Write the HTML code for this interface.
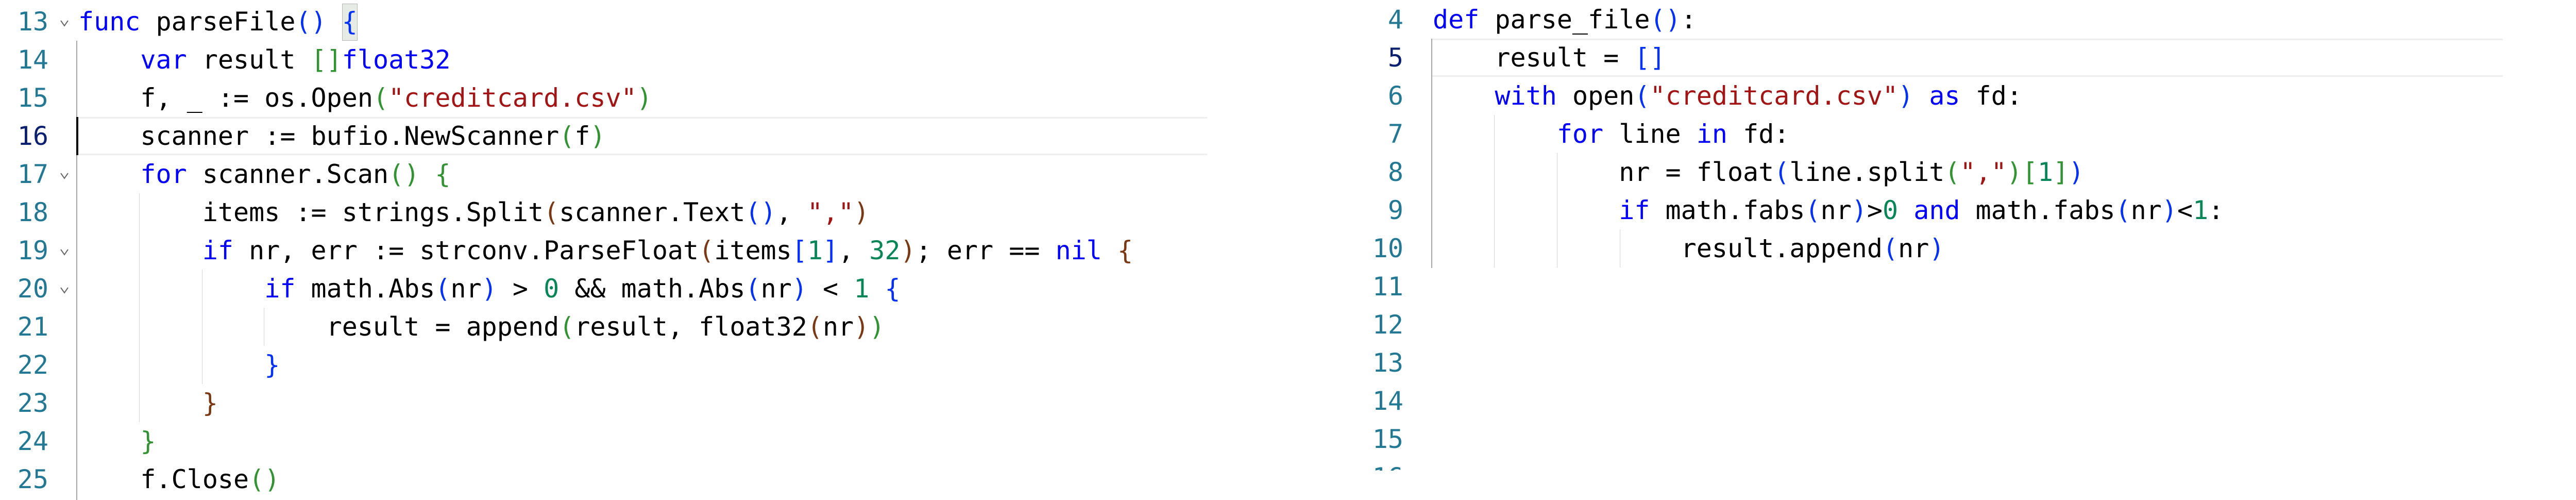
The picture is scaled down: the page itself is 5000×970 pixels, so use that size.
<!DOCTYPE html>
<html><head><meta charset="utf-8"><style>
html,body{margin:0;padding:0;background:#fff;width:5000px;height:970px;overflow:hidden;position:relative}
.l{position:absolute;height:74px;line-height:74px;font-family:"DejaVu Sans Mono","Liberation Mono",monospace;font-size:50px;white-space:pre;color:#000}
.n{position:absolute;height:74px;line-height:74px;font-family:"DejaVu Sans Mono","Liberation Mono",monospace;font-size:50px;color:#237893;text-align:right;width:200px}
.cur{color:#0b216f}
.k{color:#0000ff}.s{color:#a31515}.m{color:#098658}
.b1{color:#0431fa}.b2{color:#319331}.b3{color:#7b3814}
.v{position:absolute;width:2px;background:#a5a5a5}
.g{position:absolute;width:1px;background:#d3d3d3}
.hl{position:absolute;height:68px;border-top:3px solid #eeeeee;border-bottom:3px solid #eeeeee}
.ch{position:absolute}
#rp{position:absolute;left:0;top:0;width:5000px;height:913px;overflow:hidden}
</style></head><body>
<!-- left pane -->
<div class="hl" style="left:152px;top:227px;width:2191px"></div>
<div style="position:absolute;left:664px;top:7px;width:30px;height:72px;background:#e6ebe6;border:1px solid #b5b5b5;box-sizing:border-box"></div>
<div class="v" style="left:148px;top:79px;height:891px"></div>
<div style="position:absolute;left:148px;top:227px;width:4px;height:74px;background:#000"></div>
<div class="g" style="left:270px;top:375px;height:444px"></div>
<div class="g" style="left:392px;top:523px;height:222px"></div>
<div class="g" style="left:512px;top:597px;height:74px"></div>

<div class="n" style="left:-106px;top:5px">13</div>
<div class="n" style="left:-106px;top:79px">14</div>
<div class="n" style="left:-106px;top:153px">15</div>
<div class="n cur" style="left:-106px;top:227px">16</div>
<div class="n" style="left:-106px;top:301px">17</div>
<div class="n" style="left:-106px;top:375px">18</div>
<div class="n" style="left:-106px;top:449px">19</div>
<div class="n" style="left:-106px;top:523px">20</div>
<div class="n" style="left:-106px;top:597px">21</div>
<div class="n" style="left:-106px;top:671px">22</div>
<div class="n" style="left:-106px;top:745px">23</div>
<div class="n" style="left:-106px;top:819px">24</div>
<div class="n" style="left:-106px;top:893px">25</div>

<svg class="ch" style="left:116px;top:38px" width="18" height="14"><polyline points="2,2 9,12 16,2" fill="none" stroke="#666" stroke-width="2"/></svg>
<svg class="ch" style="left:116px;top:334px" width="18" height="14"><polyline points="2,2 9,12 16,2" fill="none" stroke="#666" stroke-width="2"/></svg>
<svg class="ch" style="left:116px;top:482px" width="18" height="14"><polyline points="2,2 9,12 16,2" fill="none" stroke="#666" stroke-width="2"/></svg>
<svg class="ch" style="left:116px;top:556px" width="18" height="14"><polyline points="2,2 9,12 16,2" fill="none" stroke="#666" stroke-width="2"/></svg>

<div class="l" style="left:152px;top:5px"><span class="k">func</span> parseFile<span class="b1">()</span> <span class="b1">{</span></div>
<div class="l" style="left:152px;top:79px">    <span class="k">var</span> result <span class="b2">[]</span><span class="k">float32</span></div>
<div class="l" style="left:152px;top:153px">    f, _ := os.Open<span class="b2">(</span><span class="s">"creditcard.csv"</span><span class="b2">)</span></div>
<div class="l" style="left:152px;top:227px">    scanner := bufio.NewScanner<span class="b2">(</span>f<span class="b2">)</span></div>
<div class="l" style="left:152px;top:301px">    <span class="k">for</span> scanner.Scan<span class="b2">()</span> <span class="b2">{</span></div>
<div class="l" style="left:152px;top:375px">        items := strings.Split<span class="b3">(</span>scanner.Text<span class="b1">()</span>, <span class="s">","</span><span class="b3">)</span></div>
<div class="l" style="left:152px;top:449px">        <span class="k">if</span> nr, err := strconv.ParseFloat<span class="b3">(</span>items<span class="b1">[</span><span class="m">1</span><span class="b1">]</span>, <span class="m">32</span><span class="b3">)</span>; err == <span class="k">nil</span> <span class="b3">{</span></div>
<div class="l" style="left:152px;top:523px">            <span class="k">if</span> math.Abs<span class="b1">(</span>nr<span class="b1">)</span> &gt; <span class="m">0</span> &amp;&amp; math.Abs<span class="b1">(</span>nr<span class="b1">)</span> &lt; <span class="m">1</span> <span class="b1">{</span></div>
<div class="l" style="left:152px;top:597px">                result = append<span class="b2">(</span>result, float32<span class="b3">(</span>nr<span class="b3">)</span><span class="b2">)</span></div>
<div class="l" style="left:152px;top:671px">            <span class="b1">}</span></div>
<div class="l" style="left:152px;top:745px">        <span class="b3">}</span></div>
<div class="l" style="left:152px;top:819px">    <span class="b2">}</span></div>
<div class="l" style="left:152px;top:893px">    f.Close<span class="b2">()</span></div>

<!-- right pane -->
<div id="rp">
<div class="hl" style="left:2779px;top:75px;width:2079px"></div>
<div class="v" style="left:2778px;top:75px;height:445px"></div>
<div class="g" style="left:2900px;top:223px;height:296px"></div>
<div class="g" style="left:3022px;top:297px;height:222px"></div>
<div class="g" style="left:3144px;top:445px;height:74px"></div>

<div class="n" style="left:2524px;top:1px">4</div>
<div class="n cur" style="left:2524px;top:75px">5</div>
<div class="n" style="left:2524px;top:149px">6</div>
<div class="n" style="left:2524px;top:223px">7</div>
<div class="n" style="left:2524px;top:297px">8</div>
<div class="n" style="left:2524px;top:371px">9</div>
<div class="n" style="left:2524px;top:445px">10</div>
<div class="n" style="left:2524px;top:519px">11</div>
<div class="n" style="left:2524px;top:593px">12</div>
<div class="n" style="left:2524px;top:667px">13</div>
<div class="n" style="left:2524px;top:741px">14</div>
<div class="n" style="left:2524px;top:815px">15</div>
<div class="n" style="left:2524px;top:889px">16</div>

<div class="l" style="left:2781px;top:1px"><span class="k">def</span> parse_file<span class="b1">()</span>:</div>
<div class="l" style="left:2781px;top:75px">    result = <span class="b1">[]</span></div>
<div class="l" style="left:2781px;top:149px">    <span class="k">with</span> open<span class="b1">(</span><span class="s">"creditcard.csv"</span><span class="b1">)</span> <span class="k">as</span> fd:</div>
<div class="l" style="left:2781px;top:223px">        <span class="k">for</span> line <span class="k">in</span> fd:</div>
<div class="l" style="left:2781px;top:297px">            nr = float<span class="b1">(</span>line.split<span class="b2">(</span><span class="s">","</span><span class="b2">)</span><span class="b2">[</span><span class="m">1</span><span class="b2">]</span><span class="b1">)</span></div>
<div class="l" style="left:2781px;top:371px">            <span class="k">if</span> math.fabs<span class="b1">(</span>nr<span class="b1">)</span>&gt;<span class="m">0</span> <span class="k">and</span> math.fabs<span class="b1">(</span>nr<span class="b1">)</span>&lt;<span class="m">1</span>:</div>
<div class="l" style="left:2781px;top:445px">                result.append<span class="b1">(</span>nr<span class="b1">)</span></div>
</div>
</body></html>
